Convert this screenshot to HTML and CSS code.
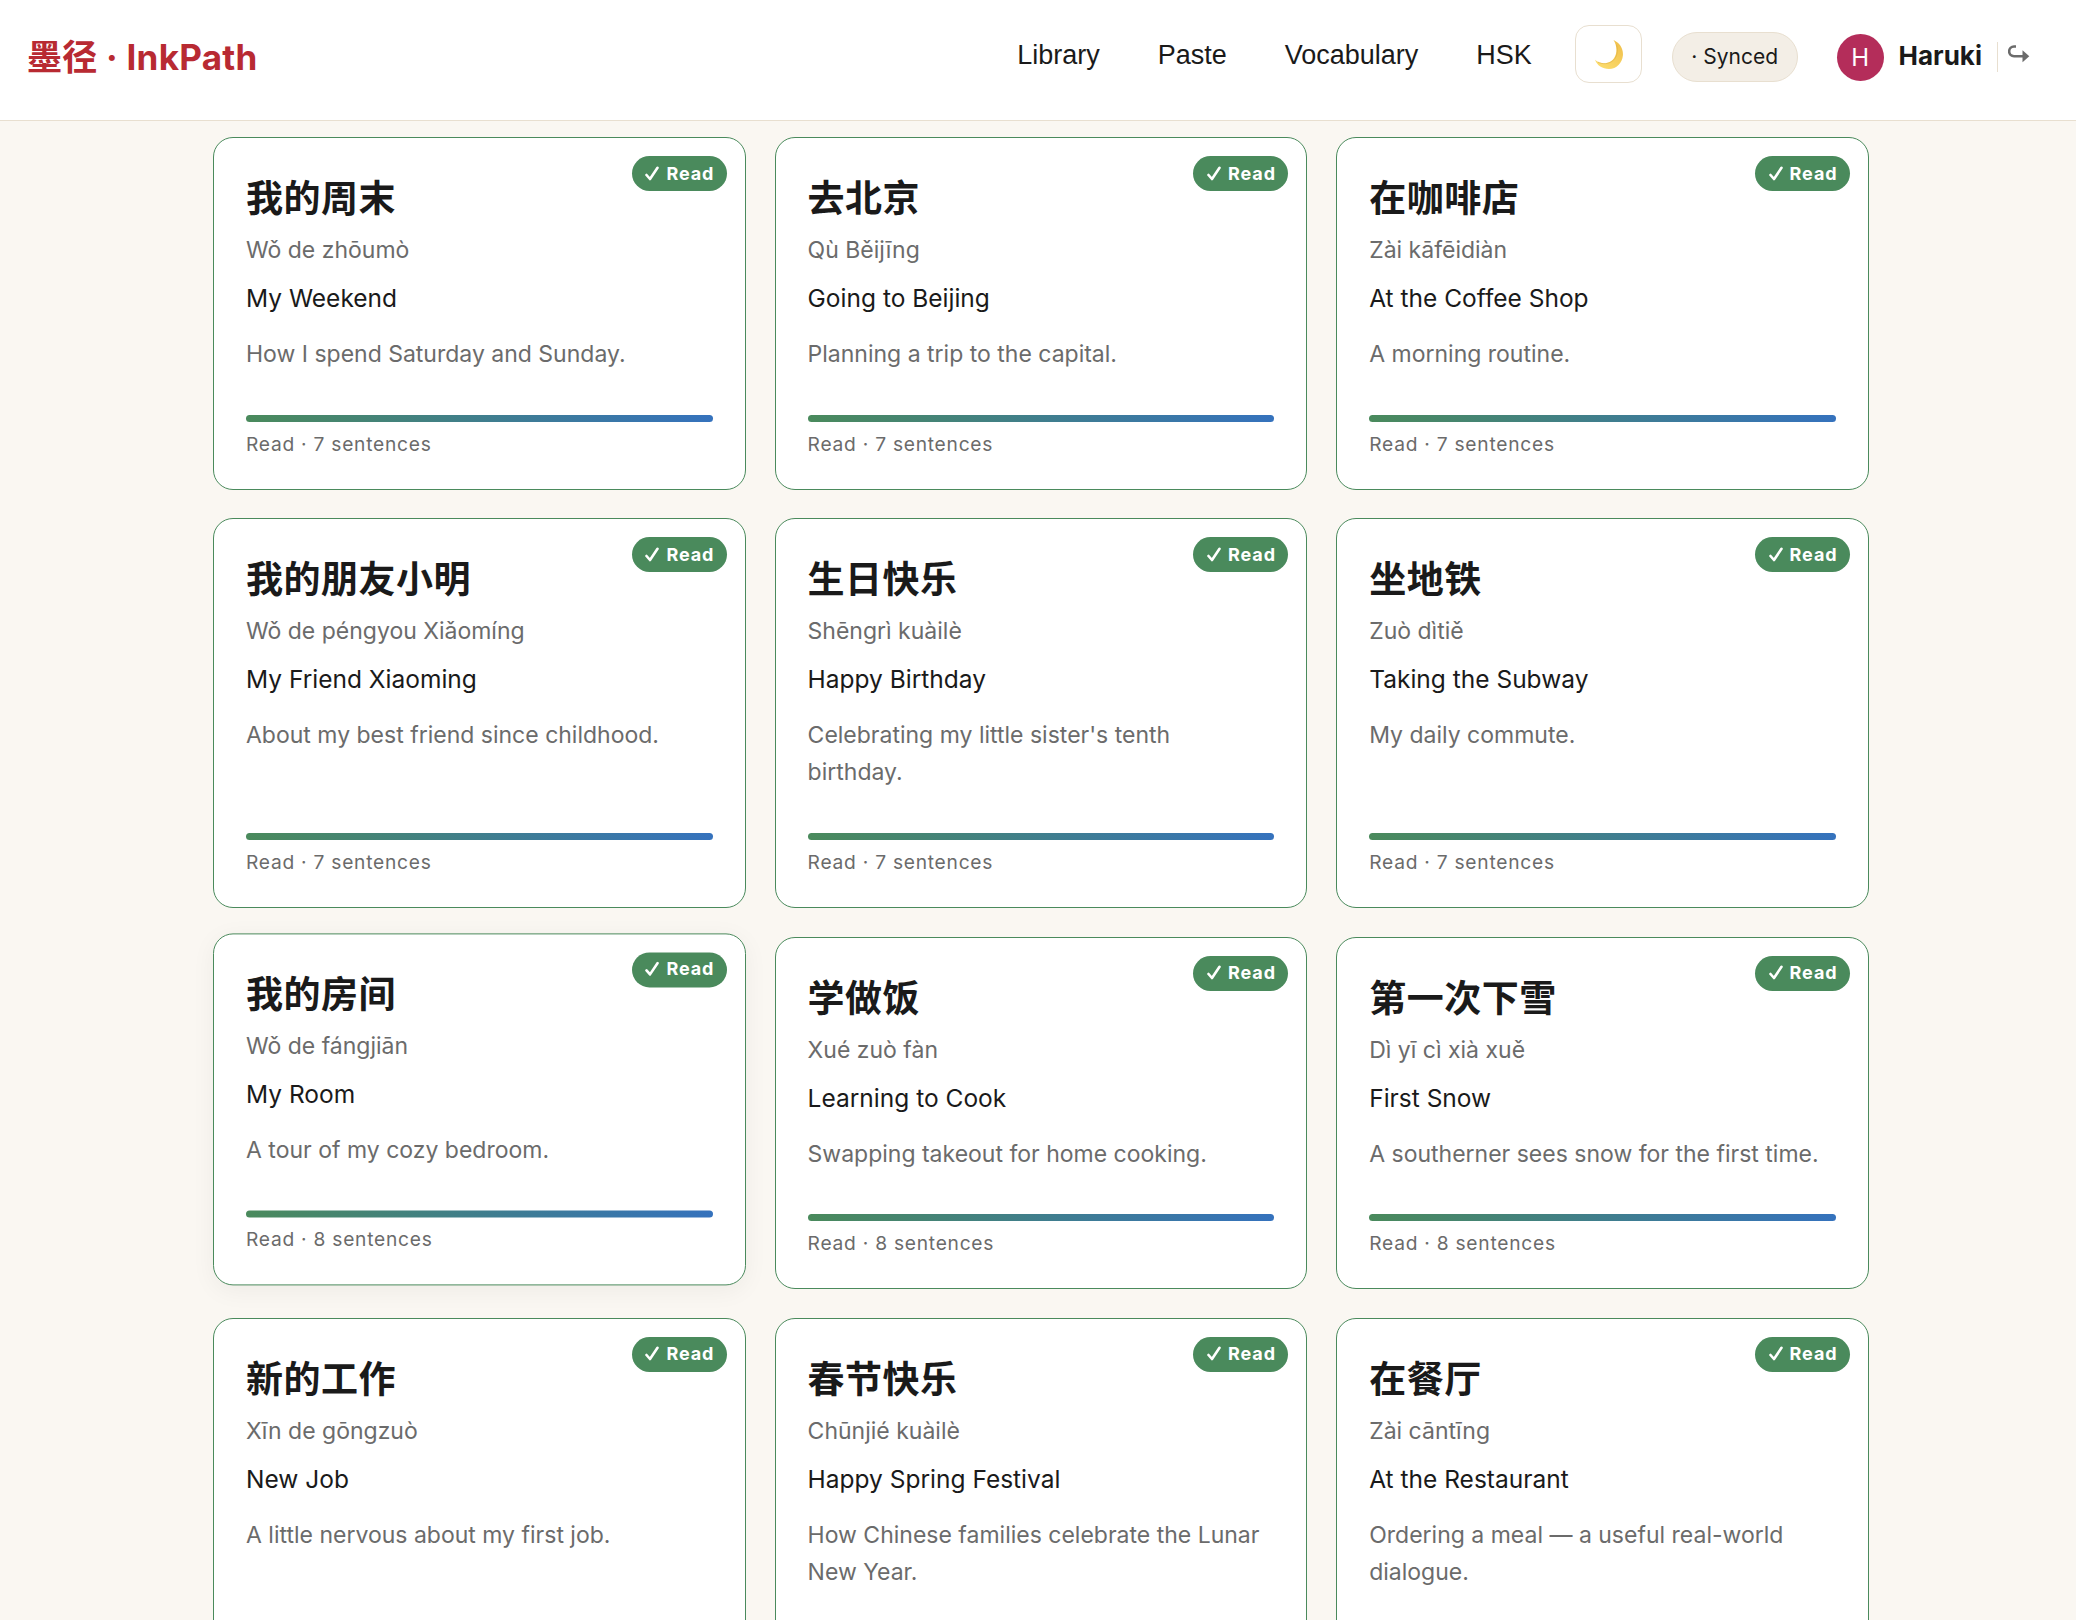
FILE: index.html
```
<!DOCTYPE html>
<html lang="en">
  <head>
    <meta charset="UTF-8" />
    <meta name="viewport" content="width=device-width, initial-scale=1.0" />
    <title>InkPath</title>
    <link rel="stylesheet" href="styles.css">
  </head>

  <body>
    <header class="topbar">
      <a class="brand" href="#">墨径 · InkPath</a>
      <nav class="nav">
        <a href="#">Library</a>
        <a href="#">Paste</a>
        <a href="#">Vocabulary</a>
        <a href="#">HSK</a>
      </nav>
      <button class="theme-btn" type="button" aria-label="Toggle theme">
        <svg width="28" height="29" viewBox="0 0 28 29">
          <defs>
            <linearGradient id="moon" x1="1" y1="0" x2="0.3" y2="1">
              <stop offset="0" stop-color="#efbd48" />
              <stop offset="1" stop-color="#fbdb6c" />
            </linearGradient>
          </defs>
          <path d="M18.500 0 C25 3 28.500 9 27.900 15.500 C27.200 23 21.500 29 14 29 C7.500 29 2 25.500 0 19.800 C4 23.500 10.500 24.500 15.500 21.500 C22.500 17.300 23 7 18.500 0 Z" fill="url(#moon)" />
          <path d="M3 22.200 C8 24.500 13 24 17 21.400 C22 18 23.500 11 21.500 4.500" fill="none" stroke="#d9a93c" stroke-width="0.800" opacity="0.600" />
        </svg>
      </button>
      <span class="sync">· Synced</span>
      <div class="user">
        <span class="avatar">H</span>
        <span class="user-name">Haruki</span>
        <button class="logout" type="button" aria-label="Sign out">
          <svg width="22" height="18" viewBox="0 0 22 18">
            <path d="M8 1.500 H6 A4.800 4.800 0 0 0 6 11.200 H15" fill="none" stroke="#6b6b6b" stroke-width="2.600" />
            <path d="M14.500 5.300 L21.300 11.300 L14.500 17.300 Z" fill="#6b6b6b" />
          </svg>
        </button>
      </div>
    </header>

    <main class="grid" id="grid"></main>

    <script>
      const stories = [
        ["我的周末", "Wǒ de zhōumò", "My Weekend", "How I spend Saturday and Sunday.", 7],
        ["去北京", "Qù Běijīng", "Going to Beijing", "Planning a trip to the capital.", 7],
        ["在咖啡店", "Zài kāfēidiàn", "At the Coffee Shop", "A morning routine.", 7],
        ["我的朋友小明", "Wǒ de péngyou Xiǎomíng", "My Friend Xiaoming", "About my best friend since childhood.", 7],
        ["生日快乐", "Shēngrì kuàilè", "Happy Birthday", "Celebrating my little sister's tenth birthday.", 7],
        ["坐地铁", "Zuò dìtiě", "Taking the Subway", "My daily commute.", 7],
        ["我的房间", "Wǒ de fángjiān", "My Room", "A tour of my cozy bedroom.", 8],
        ["学做饭", "Xué zuò fàn", "Learning to Cook", "Swapping takeout for home cooking.", 8],
        ["第一次下雪", "Dì yī cì xià xuě", "First Snow", "A southerner sees snow for the first time.", 8],
        ["新的工作", "Xīn de gōngzuò", "New Job", "A little nervous about my first job.", 8],
        ["春节快乐", "Chūnjié kuàilè", "Happy Spring Festival", "How Chinese families celebrate the Lunar New Year.", 8],
        ["在餐厅", "Zài cāntīng", "At the Restaurant", "Ordering a meal — a useful real-world dialogue.", 8],
      ];
      const activeStory = 6;

      document.getElementById("grid").innerHTML = stories
        .map(
          ([zh, pinyin, en, summary, count], i) => `
        <article class="card${i === activeStory ? " card-active" : ""}">
          <span class="badge">
            <svg width="14" height="15" viewBox="0 0 14 15">
              <path d="M1.500 9 L5 13 L12.500 1.800" fill="none" stroke="#fff" stroke-width="2.600" stroke-linecap="round" stroke-linejoin="round" />
            </svg>
            Read
          </span>
          <h2 class="zh" lang="zh">${zh}</h2>
          <p class="pinyin">${pinyin}</p>
          <p class="en">${en}</p>
          <p class="summary">${summary}</p>
          <div class="progress"></div>
          <p class="meta">Read · ${count} sentences</p>
        </article>`
        )
        .join("");
    </script>
  </body>
</html>
```
FILE: styles.css
```
* {
  margin: 0;
  padding: 0;
  box-sizing: border-box;
}

body {
  height: 1620px;
  overflow: hidden;
  font-family: Inter, "Noto Sans CJK SC", sans-serif;
  background-color: #faf7f2;
  color: #1a1a1a;
}

a {
  color: inherit;
  text-decoration: none;
}

button {
  font: inherit;
  cursor: pointer;
}

.topbar {
  display: flex;
  align-items: center;
  height: 121px;
  padding: 0 45px 12px 27px;
  background-color: #fff;
  border-bottom: 1px solid #e8dfd0;
}

.brand {
  margin-right: auto;
  font-size: 35px;
  font-weight: 700;
  letter-spacing: 0.25px;
  color: #b82a32;
}

.nav {
  display: flex;
  gap: 58px;
  margin: 3px 43px 0 0;
  font-family: "Liberation Sans", Arial, sans-serif;
  font-size: 27px;
}

.theme-btn {
  display: flex;
  align-items: center;
  justify-content: center;
  width: 67px;
  height: 58px;
  margin-right: 30px;
  padding-left: 2px;
  background-color: #fff;
  border: 1px solid #e8dfd0;
  border-radius: 14px;
}

.sync {
  display: flex;
  align-items: center;
  height: 50px;
  margin: 6px 39px 0 0;
  padding: 0 18.5px 2px;
  font-size: 21px;
  background-color: #f3eee6;
  border: 1px solid #e8dfd0;
  border-radius: 25px;
}

.user {
  display: flex;
  align-items: center;
  margin-top: 6px;
}

.avatar {
  display: flex;
  align-items: center;
  justify-content: center;
  width: 47px;
  height: 47px;
  margin-right: 15px;
  font-size: 24px;
  color: #fff;
  background-color: #b42d5a;
  border-radius: 50%;
}

.user-name {
  padding-bottom: 3px;
  font-size: 26px;
  font-weight: 700;
}

.logout {
  display: flex;
  height: 30px;
  margin-left: 15px;
  padding: 3px 1px 0 10px;
  background: none;
  border: 0;
  border-left: 1px solid #e8dfd0;
}

.grid {
  display: grid;
  grid-template-columns: repeat(3, 1fr);
  gap: 28.6px 28.8px;
  width: 1656px;
  margin: 16px 0 0 213px;
}

.card {
  position: relative;
  display: flex;
  flex-direction: column;
  padding: 33px 32px 29px;
  background-color: #fff;
  border: 1px solid #4a8a5c;
  border-radius: 20px;
}

.card-active {
  transform: translateY(-3.6px);
  box-shadow: 0 5px 24px rgba(0, 0, 0, 0.05);
}

.badge {
  position: absolute;
  top: 18px;
  right: 18px;
  display: flex;
  align-items: center;
  gap: 7px;
  height: 35px;
  padding: 0 12.5px 1px 13.5px;
  font-size: 18px;
  font-weight: 700;
  letter-spacing: 0.9px;
  color: #fff;
  background-color: #4a8a5c;
  border-radius: 18px;
}

.zh {
  font-size: 37px;
  font-weight: 700;
  line-height: 55px;
  letter-spacing: 0.5px;
}

.pinyin {
  font-size: 23px;
  line-height: 37px;
  margin-top: 6px;
  color: #6b6b6b;
}

.en {
  margin-top: 9px;
  font-size: 24.5px;
  line-height: 40px;
}

.summary {
  margin: 18px 0 42px;
  padding-right: 8px;
  font-size: 23px;
  line-height: 36.8px;
  color: #6b6b6b;
}

.progress {
  height: 7px;
  margin-top: auto;
  background: linear-gradient(90deg, #4a8a5c, #3572bd);
  border-radius: 4px;
}

.meta {
  margin-top: 7px;
  font-size: 19.2px;
  line-height: 31px;
  letter-spacing: 0.75px;
  color: #6b6b6b;
}
```
